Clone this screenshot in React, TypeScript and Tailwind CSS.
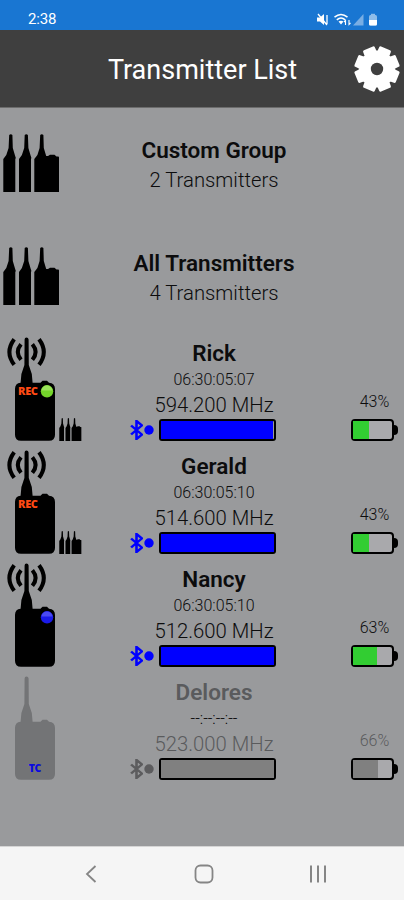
type Transmitter = {
  name: string;
  time: string;
  frequency: string;
  battery: number;
  level: number;
  rec?: boolean;
  led?: "green" | "blue";
  grouped?: boolean;
  offline?: boolean;
};

const groups = [
  { name: "Custom Group", count: 2 },
  { name: "All Transmitters", count: 4 },
];

const transmitters: Transmitter[] = [
  { name: "Rick", time: "06:30:05:07", frequency: "594.200", battery: 43, level: 99, rec: true, led: "green", grouped: true },
  { name: "Gerald", time: "06:30:05:10", frequency: "514.600", battery: 43, level: 100, rec: true, grouped: true },
  { name: "Nancy", time: "06:30:05:10", frequency: "512.600", battery: 63, level: 100, led: "blue" },
  { name: "Delores", time: "--:--:--:--", frequency: "523.000", battery: 66, level: 100, offline: true },
];

// Eight teeth, with a notch at the top
const gearPoints = Array.from({ length: 8 }, (_, i) => {
  const mid = 22.5 + i * 45;
  return [
    [17, -17],
    [21.4, -13],
    [21.4, 13],
    [17, 17],
  ].map(([r, offset]) => {
    const a = ((mid + offset) * Math.PI) / 180;
    return `${(24 + r * Math.sin(a)).toFixed(2)},${(24 - r * Math.cos(a)).toFixed(2)}`;
  });
})
  .flat()
  .join(" ");

function Gear() {
  return (
    <svg viewBox="0 0 48 48" className="h-12 w-12">
      <polygon points={gearPoints} fill="#fff" stroke="#fff" strokeWidth="3" strokeLinejoin="round" />
      <circle cx="24" cy="24" r="6.2" fill="#3f3f3f" />
    </svg>
  );
}

function GroupIcon({ className }: { className: string }) {
  return (
    <svg viewBox="0 0 56 58" className={className}>
      <path d="M6.2 1Q7.8-.6 9.4 1L9.8 14 12 21.5 12.8 24 12.3 25V58H.3V25L3.3 21 5.6 14Z" />
      <path d="M21.7 1Q23.3-.6 24.9 1L25.4 14 27.6 21.5 28.4 24 28 25V58H16V25L18.9 21 21.2 14Z" />
      <path d="M37.2 1Q38.8-.6 40.4 1L40.8 14 43.2 22H45L47 20.8H51.5L53.5 22.5H55.2Q56 22.5 56 23.5V58H31.3V25L34.4 21 36.6 14Z" />
    </svg>
  );
}

function DeviceIcon({ tx }: { tx: Transmitter }) {
  const color = tx.offline ? "#737476" : "#000";
  return (
    <svg viewBox="0 0 58 112" className="h-[112px] w-[58px] shrink-0">
      {!tx.offline && (
        <g fill="none" stroke="#000" strokeWidth="4">
          <path d="M14.2 3.2Q4.6 16 14.2 28.8" />
          <path d="M21 8.2Q14.6 16 21 23.8" />
          <path d="M39 3.2Q48.6 16 39 28.8" />
          <path d="M32.4 8.2Q38.8 16 32.4 23.8" />
        </g>
      )}
      <path
        fill={color}
        d="M24.6 3.500Q24.6 1.500 26.5 1.500T28.6 3.500L28.8 29 31.8 38 32.6 46.7H40.5L42.5 44.8H47L49 46.7Q55 47 55 53V98.7Q55 104.7 49 104.7H21Q15 104.7 15 98.7V53Q15 47 20.6 46.7L21.4 38 24.4 29Z"
      />
      {tx.rec && (
        <text x="18" y="59.3" textLength="20" fill="#ff4a14" className="font-['Open_Sans',sans-serif] text-[11px] font-extrabold">
          REC
        </text>
      )}
      {tx.led && <circle cx="47" cy="55.3" r="6.2" fill={tx.led === "green" ? "#75d52b" : "#1a1ae8"} />}
      {tx.led && <path d="M41.5 54.5a5.5 5 0 0 1 11 0Z" fill={tx.led === "green" ? "#9be45a" : "#4a4af2"} />}
      {tx.offline && (
        <text x="28.8" y="97" textLength="12.5" fill="#0a0ae0" className="font-['Open_Sans',sans-serif] text-[10.5px] font-extrabold">
          TC
        </text>
      )}
    </svg>
  );
}

function Battery({ tx }: { tx: Transmitter }) {
  return (
    <div className="flex items-center">
      <div className="h-[22px] w-[43px] rounded-[4px] border-2 border-black bg-[#a9a9ac]">
        <div className={tx.offline ? "h-full bg-[#808080]" : "h-full bg-[#32cd32]"} style={{ width: `${tx.battery - 2}%` }} />
      </div>
      <div className="h-[10px] w-[4px] rounded-r-sm bg-black" />
    </div>
  );
}

function TransmitterRow({ tx }: { tx: Transmitter }) {
  const accent = tx.offline ? "#5c5c5e" : "#0000ff";
  return (
    <li className={`grid h-[112.9px] grid-cols-[84px_260px_60px] ${tx.offline ? "text-[#5a5b5d]" : "text-[#0c0c0d]"}`}>
      <div className="flex">
        <DeviceIcon tx={tx} />
        {tx.grouped && <GroupIcon className="mt-[82px] ml-px h-[23px] w-[22.5px]" />}
      </div>
      <div className="flex flex-col items-center">
        <h2 className="mt-[3px] text-[22.500px] leading-7 font-semibold">{tx.name}</h2>
        <p className={`mt-px text-[16px] leading-6 font-light ${tx.offline ? "text-black" : ""}`}>{tx.time}</p>
        <p className="text-[20.3px] leading-[27px] font-light">{tx.frequency} MHz</p>
        <div className="mr-[22px] flex items-center self-end pr-[46px]">
          <svg viewBox="6 1 12 22" preserveAspectRatio="none" className="h-5 w-[13px]">
            <path d="m7 7 10 10-5 5V2l5 5L7 17" fill="none" stroke={accent} strokeWidth="2.4" />
          </svg>
          <svg viewBox="0 0 10 10" className="mr-[5px] ml-px h-[10px] w-[10px]">
            <circle cx="5" cy="5" r="4.7" fill={accent} />
          </svg>
          <div className="h-[22px] w-[117px] rounded-[3px] border-2 border-black bg-[#999a9c]">
            <div className={tx.offline ? "h-full bg-[#808080]" : "h-full bg-[#0000ff]"} style={{ width: `${tx.level}%` }} />
          </div>
        </div>
      </div>
      <div className="flex flex-col pl-[7px]">
        <p className="mt-[55px] mr-[6px] mb-[6px] text-center text-[16px] leading-[22px] font-light">{tx.battery}%</p>
        <Battery tx={tx} />
      </div>
    </li>
  );
}

function StatusBar() {
  return (
    <div className="flex h-[30px] items-center justify-between bg-[#1976d2] pt-[9px] pr-[25px] pl-7 text-white">
      <span className="text-[15px] leading-none tracking-[-0.2px]">2:38</span>
      <svg viewBox="0 0 62 14" className="h-[14px] w-[62px]">
        <path d="M0 4.5H3L7 1V12L3 8.5H0Z" fill="#fff" />
        <path d="M1 1 10 12M10 2V11" stroke="#fff" strokeWidth="1.3" />
        <g fill="none" stroke="#fff" strokeWidth="1.5">
          <path d="M17.5 4.2Q24-1.2 30.5 4.2M19.8 6.8Q24 3.4 28.2 6.8" />
          <path d="M28.5 12V7.5L27 9M32 7V11.5L33.5 10" strokeWidth="1.1" />
        </g>
        <path d="M21.5 8.5Q24 6.8 26.5 8.5L24 11.5Z" fill="#fff" />
        <path d="M36 12.5 46.5 1V12.5Z" fill="#79aee4" />
        <rect x="52" y="2" width="8" height="10.5" rx="1.5" fill="#8fbdea" />
        <rect x="54" y="0.8" width="4" height="2" fill="#8fbdea" />
        <path d="M52 7H60V11Q60 12.5 58.5 12.5H53.5Q52 12.5 52 11Z" fill="#fff" />
      </svg>
    </div>
  );
}

function NavBar() {
  return (
    <nav className="flex h-[54px] items-center justify-between border-t border-[#d5d5d5] bg-[#f5f5f5] pt-px pr-[77px] pl-[85px]">
      <svg viewBox="0 0 12 18" className="h-[18px] w-3" fill="none" stroke="#858585" strokeWidth="1.8">
        <path d="M10.5 1 2 9l8.5 8" />
      </svg>
      <svg viewBox="0 0 20 20" className="ml-px h-5 w-5" fill="none" stroke="#858585" strokeWidth="1.8">
        <rect x="1.5" y="1.5" width="17" height="17" rx="5" />
      </svg>
      <svg viewBox="0 0 18 18" className="h-[18px] w-[18px]" stroke="#858585" strokeWidth="2">
        <path d="M2 .5v17M9 .5v17M16 .5v17" />
      </svg>
    </nav>
  );
}

export default function App() {
  return (
    <div className="flex h-[900px] w-[404px] flex-col overflow-hidden bg-[#999a9c] font-[Roboto,sans-serif]">
      <StatusBar />
      <header className="grid h-[78px] grid-cols-[1fr_auto_1fr] items-center border-b border-[#6c6c6c] bg-[#3f3f3f]">
        <h1 className="col-start-2 pt-[3px] pl-px text-[27px] text-white">Transmitter List</h1>
        <button className="mr-[3px] justify-self-end" aria-label="Settings">
          <Gear />
        </button>
      </header>
      <ul className="flex-1 pt-[2.2px]">
        {groups.map((group) => (
          <li key={group.name} className="grid h-[112.9px] grid-cols-[84px_260px_60px] text-[#0c0c0d]">
            <GroupIcon className="mt-[23.5px] ml-[3px] h-[58px] w-14" />
            <div className="flex flex-col items-center pt-[26px]">
              <h2 className="text-[22.500px] leading-7 font-semibold">{group.name}</h2>
              <p className="mt-[2px] text-[20.3px] leading-7 font-light">{group.count} Transmitters</p>
            </div>
          </li>
        ))}
        {transmitters.map((tx) => (
          <TransmitterRow key={tx.name} tx={tx} />
        ))}
      </ul>
      <NavBar />
    </div>
  );
}
